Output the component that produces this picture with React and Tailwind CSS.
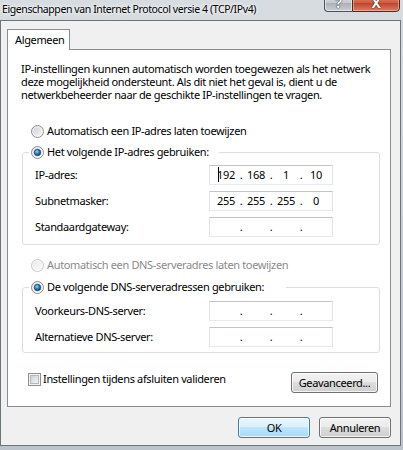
import { Fragment } from "react";

function Radio({ checked, disabled }) {
  return (
    <svg width="13" height="13" viewBox="0 0 13 13" className="shrink-0">
      <defs>
        <linearGradient id="rb-on" x1="0" y1="0" x2="1" y2="1">
          <stop offset="0" stopColor="#c9ccd1" />
          <stop offset="1" stopColor="#fbfbfb" />
        </linearGradient>
        <linearGradient id="rb-off" x1="0" y1="0" x2="1" y2="1">
          <stop offset="0" stopColor="#e8e8e8" />
          <stop offset="1" stopColor="#fbfbfb" />
        </linearGradient>
        <radialGradient id="rb-dot" cx="0.4" cy="0.35" r="0.75">
          <stop offset="0" stopColor="#8fdcff" />
          <stop offset="0.45" stopColor="#2b84c6" />
          <stop offset="1" stopColor="#0b2a48" />
        </radialGradient>
      </defs>
      <circle
        cx="6.5"
        cy="6.5"
        r="6"
        fill={disabled ? "url(#rb-off)" : "url(#rb-on)"}
        stroke={disabled ? "#c8c8c8" : "#8e8f8f"}
      />
      <circle cx="6.5" cy="6.5" r="4.8" fill="none" stroke="#ffffff" strokeOpacity="0.6" />
      {checked && <circle cx="6.5" cy="6.5" r="3.2" fill="url(#rb-dot)" stroke="#17395a" strokeWidth="0.7" />}
    </svg>
  );
}

function RadioRow({ label, checked, disabled, className = "" }) {
  return (
    <div className={`flex items-center h-[16px] gap-[3px] ${className}`}>
      <Radio checked={checked} disabled={disabled} />
      <span className={disabled ? "text-[#8a8a8a]" : ""}>{label}</span>
    </div>
  );
}

function Checkbox() {
  return (
    <svg width="13" height="13" viewBox="0 0 13 13" className="shrink-0">
      <defs>
        <linearGradient id="cb-in" x1="0" y1="0" x2="1" y2="1">
          <stop offset="0" stopColor="#cbcfd5" />
          <stop offset="1" stopColor="#f6f6f6" />
        </linearGradient>
      </defs>
      <rect x="0.5" y="0.5" width="12" height="12" fill="#f4f4f4" stroke="#8e8f8f" />
      <rect x="2.5" y="2.5" width="8" height="8" fill="url(#cb-in)" stroke="#b3b8bd" />
    </svg>
  );
}

function IpBox({ parts = ["", "", "", ""], caret }) {
  return (
    <div className="w-[124px] h-[20px] flex items-center pl-[4px] bg-white border border-[#e2e3ea] border-t-[#c2c4ca] border-b-[#e3e9ef]">
      {parts.map((p, i) => (
        <Fragment key={i}>
          <span className="relative w-[24px] text-center leading-[18px]">
            {caret && i === 0 && <span className="absolute left-[4px] top-[1px] w-px h-[15px] bg-black" />}
            {p}
          </span>
          {i < 3 && <span className="w-[6px] text-center leading-[18px]">.</span>}
        </Fragment>
      ))}
    </div>
  );
}

function IpRow({ label, parts, caret }) {
  return (
    <div className="flex items-center h-[20px]">
      <span className="w-[174px]">{label}</span>
      <IpBox parts={parts} caret={caret} />
    </div>
  );
}

function WinButton({ children, primary, className = "" }) {
  return (
    <button
      className={`h-[21px] rounded-[3px] border leading-[19px] text-center shadow-[inset_0_0_0_1px_rgba(255,255,255,0.75)] ${
        primary
          ? "border-[#3c7fb1] bg-[linear-gradient(to_bottom,#eaf6fd_0%,#d9f0fc_50%,#bee6fd_50%,#a7d9f5_100%)]"
          : "border-[#707070] bg-[linear-gradient(to_bottom,#f2f2f2_0%,#ebebeb_50%,#dddddd_50%,#cfcfcf_100%)]"
      } ${className}`}
    >
      {children}
    </button>
  );
}

export default function App() {
  return (
    <div className="w-[403px] h-[450px] overflow-hidden bg-[linear-gradient(to_bottom,#d7dce1,#bcc3ca)] font-['Noto_Sans',sans-serif] text-[11px] tracking-[-0.35px] text-black">
      {/* Title bar */}
      <div className="h-[20px] flex justify-between items-start">
        <div className="pl-[2px] pt-[1px] leading-[16px] text-[10.5px] tracking-[-0.4px] [text-shadow:0_0_6px_#fff,0_0_3px_#fff]">
          Eigenschappen van Internet Protocol versie 4 (TCP/IPv4)
        </div>
        <div className="flex mr-[3px] -mt-[8px]">
          <div className="w-[28px] h-[20px] rounded-bl-[4px] border border-r-0 border-[#4b5259] bg-[linear-gradient(to_bottom,#e6eaee,#c2c8ce_55%,#a9b0b7_56%,#c9cfd4)] shadow-[inset_0_0_0_1px_rgba(255,255,255,0.5)] flex items-end justify-center pb-[1px]">
            <span className="font-bold text-[14px] leading-[14px] text-white [text-shadow:0_0_1px_#222,0_0_1px_#222]">?</span>
          </div>
          <div className="w-[48px] h-[20px] rounded-br-[4px] border border-[#5b2419] bg-[linear-gradient(to_bottom,#e9a08d,#cf5a40_55%,#c0432b_56%,#dc7d62)] shadow-[inset_0_0_0_1px_rgba(255,210,200,0.5)] flex items-end justify-center pb-[1px]">
            <span className="font-bold text-[14px] leading-[14px] text-white [text-shadow:0_0_1px_#2a0a05,0_0_1px_#2a0a05]">X</span>
          </div>
        </div>
      </div>

      {/* Client area */}
      <div className="w-[401px] h-[426px] border border-[#6b737b] bg-[#f0f0f0] pl-[6px] pt-[8px]">
        <div className="relative z-10 w-[63px] h-[21px] border border-b-0 border-[#898c95] bg-white pl-[7px] leading-[19px]">
          Algemeen
        </div>
        <div className="w-[384px] h-[358px] -mt-px border border-[#898c95] bg-white pt-[12px]">
          <div className="pl-[13px] leading-[13px] whitespace-nowrap">
            <p>IP-instellingen kunnen automatisch worden toegewezen als het netwerk</p>
            <p>deze mogelijkheid ondersteunt. Als dit niet het geval is, dient u de</p>
            <p>netwerkbeheerder naar de geschikte IP-instellingen te vragen.</p>
          </div>

          <RadioRow className="mt-[22px] ml-[23px]" label="Automatisch een IP-adres laten toewijzen" />
          <fieldset className="mt-[5px] ml-[14px] w-[358px] rounded-[3px] border border-[#d5dfe5]">
            <legend className="ml-[6px] pl-[2px] pr-[10px]">
              <RadioRow checked label="Het volgende IP-adres gebruiken:" />
            </legend>
            <div className="flex flex-col gap-[6px] pl-[12px] pt-[5px] pb-[7px]">
              <IpRow label="IP-adres:" parts={["192", "168", "1", "10"]} caret />
              <IpRow label="Subnetmasker:" parts={["255", "255", "255", "0"]} />
              <IpRow label="Standaardgateway:" />
            </div>
          </fieldset>

          <RadioRow className="mt-[12px] ml-[23px]" disabled label="Automatisch een DNS-serveradres laten toewijzen" />
          <fieldset className="mt-[6px] ml-[14px] w-[358px] rounded-[3px] border border-[#d5dfe5]">
            <legend className="ml-[6px] pl-[2px] pr-[22px]">
              <RadioRow checked label="De volgende DNS-serveradressen gebruiken:" />
            </legend>
            <div className="flex flex-col gap-[6px] pl-[12px] pt-[6px] pb-[5px]">
              <IpRow label="Voorkeurs-DNS-server:" />
              <IpRow label="Alternatieve DNS-server:" />
            </div>
          </fieldset>

          <div className="mt-[19px] ml-[20px] mr-[12px] flex justify-between items-start">
            <div className="flex items-center gap-[2px] h-[14px]">
              <Checkbox />
              <span>Instellingen tijdens afsluiten valideren</span>
            </div>
            <WinButton className="w-[87px]">Geavanceerd...</WinButton>
          </div>
        </div>

        <div className="w-[384px] mt-[10px] flex justify-end gap-[9px]">
          <WinButton primary className="w-[72px]">OK</WinButton>
          <WinButton className="w-[72px]">Annuleren</WinButton>
        </div>
      </div>
    </div>
  );
}
